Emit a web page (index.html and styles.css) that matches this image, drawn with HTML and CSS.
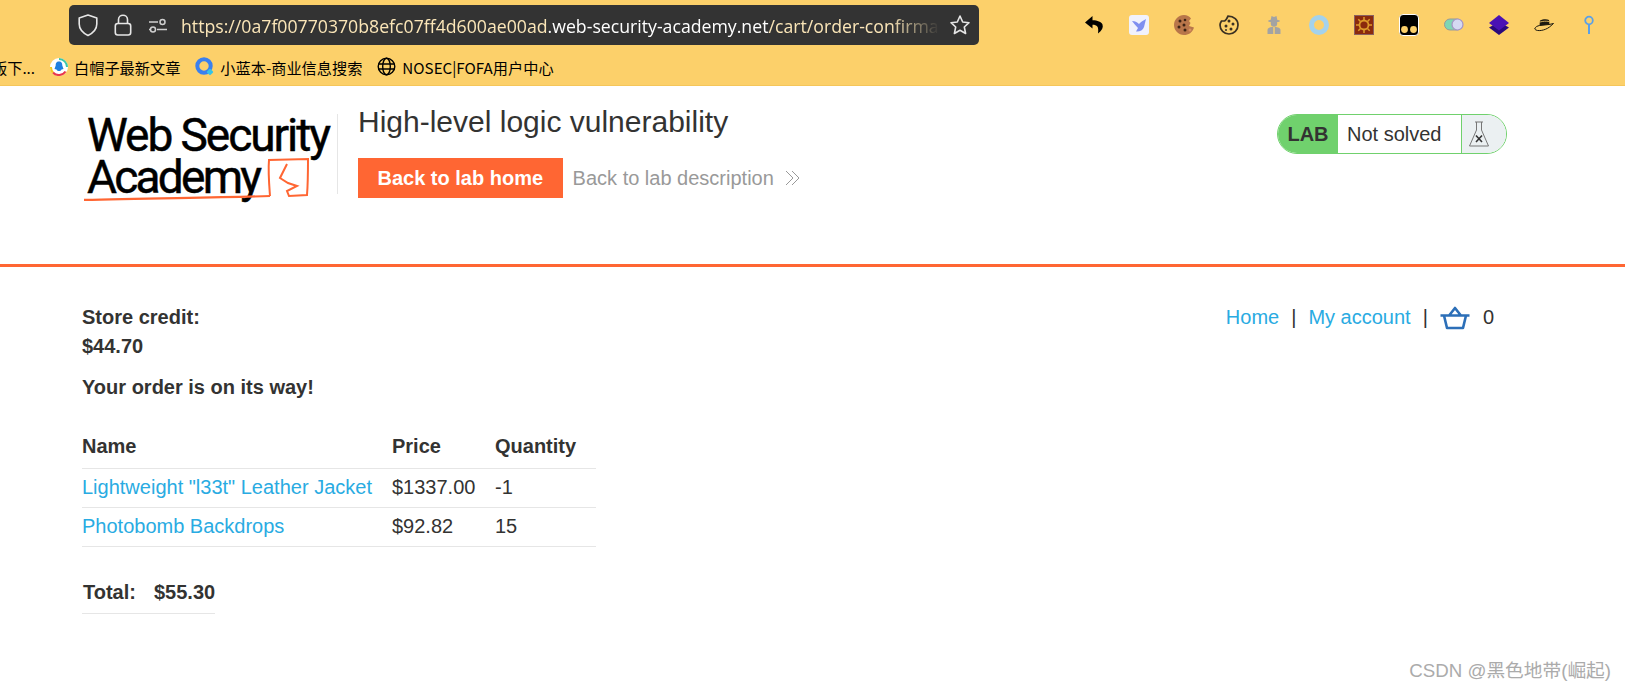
FILE: index.html
```html
<!DOCTYPE html>
<html>
<head>
    <title>High-level logic vulnerability</title>
    <link rel="stylesheet" href="styles.css">
</head>
<body>
    <!-- Browser toolbar -->
    <div class="browser">
        <div class="toolbar">
            <div class="urlbar">
                <svg class="url-icon" width="20" height="24" viewBox="0 0 20 24"><path d="M10 2 L18.800 5 V11 C18.800 16.500 15 20 10 22.500 C5 20 1.200 16.500 1.200 11 V5 Z" fill="none" stroke="#e6e6e6" stroke-width="1.600" stroke-linejoin="round"/></svg>
                <svg class="url-icon" width="18" height="24" viewBox="0 0 18 24"><rect x="1.300" y="10.500" width="15.400" height="11.500" rx="2.500" fill="none" stroke="#e6e6e6" stroke-width="1.600"/><path d="M4.500 10.500 V6.500 C4.500 0.800 13.500 0.800 13.500 6.500 V10.500" fill="none" stroke="#e6e6e6" stroke-width="1.600"/></svg>
                <svg class="url-icon" width="20" height="22" viewBox="0 0 20 22"><path d="M1 8 H10 M1 15.500 H2 M9 15.500 H19" stroke="#cfcfcf" stroke-width="1.500"/><circle cx="14.500" cy="8" r="2.500" fill="none" stroke="#cfcfcf" stroke-width="1.500"/><circle cx="5" cy="15.500" r="2.500" fill="none" stroke="#cfcfcf" stroke-width="1.500"/></svg>
                <div class="url-text"><span class="url-dim">https://0a7f00770370b8efc07ff4d600ae00ad</span>.web-security-academy.net<span class="url-dim">/cart/order-confirma</span></div>
                <svg class="url-star" width="22" height="22" viewBox="0 0 22 22"><path d="M11 2 L13.700 8 L20 8.700 L15.300 13 L16.600 19.500 L11 16.200 L5.400 19.500 L6.700 13 L2 8.700 L8.300 8 Z" fill="none" stroke="#e6e6e6" stroke-width="1.600" stroke-linejoin="round"/></svg>
            </div>
            <div class="extensions">
                <svg width="20" height="20" viewBox="0 0 20 20"><path d="M8.500 1 L1 7.500 L8.500 13.500 V9.800 C13 9.800 15 11.500 14 18.500 C18 15.500 19.500 12.500 18.500 9.500 C17.500 7 13.500 5.300 8.500 5.300 Z" fill="#000"/></svg>
                <svg width="20" height="20" viewBox="0 0 20 20"><rect width="20" height="20" rx="3" fill="#f1f2fd"/><path d="M3 6 C6 6 8 7 10 9 C12 7 14 5.500 17 4 L15 12 C14 15.500 10 17 7 16.500 L9 13 C7 11 5 8.500 3 6 Z" fill="#7f8ff0"/></svg>
                <svg width="20" height="20" viewBox="0 0 20 20"><path d="M10 0 C13 0 15.500 1.200 17 3.500 L15 6 L16.500 8 L15 11 L20 12.500 C18.500 17.500 14.500 20 10 20 C4.500 20 0 15.500 0 10 C0 4.500 4.500 0 10 0 Z" fill="#b8764a"/><g fill="#3d2415"><circle cx="6" cy="6" r="1.500"/><circle cx="11" cy="5" r="1.300"/><circle cx="5" cy="12" r="1.500"/><circle cx="10" cy="10" r="1.500"/><circle cx="11" cy="15" r="1.500"/></g><circle cx="16" cy="15" r="1.500" fill="#d98f5f"/></svg>
                <svg width="20" height="20" viewBox="0 0 20 20"><path d="M9 1.200 C8 3.500 7 5.500 5.500 6 L2.500 6 C1.500 7.500 1 8.500 1 10 C1 15 5 19 10 19 C15 19 19 15 19 10 C19 5 15 1.200 9 1.200 Z" fill="none" stroke="#3a3022" stroke-width="1.700"/><g fill="#3a3022"><circle cx="10" cy="6" r="1.500"/><circle cx="14" cy="9" r="1.500"/><circle cx="7" cy="11" r="1.500"/><circle cx="12" cy="14" r="1.500"/><circle cx="7" cy="15" r="1"/></g></svg>
                <svg width="20" height="20" viewBox="0 0 20 20"><g fill="#a3a3a3"><ellipse cx="10" cy="6" rx="6" ry="1.500"/><path d="M6.500 6 L7.500 1 L10 2 L12.500 1 L13.500 6 Z"/><circle cx="10" cy="8.500" r="3.200"/><path d="M3.500 19 V15 C3.500 13 6 12 9.300 12 V19 Z M16.500 19 V15 C16.500 13 14 12 10.700 12 V19 Z"/></g></svg>
                <svg width="20" height="20" viewBox="0 0 20 20"><circle cx="10" cy="10" r="7.500" fill="none" stroke="#a4d2ec" stroke-width="5"/></svg>
                <svg width="20" height="20" viewBox="0 0 20 20"><rect x="0.500" y="0.500" width="19" height="19" fill="#8b2a0d" stroke="#8a6060"/><circle cx="10" cy="10" r="4.500" fill="none" stroke="#dd9a2a" stroke-width="1.800"/><path d="M10 2 V5 M10 15 V18 M2 10 H5 M15 10 H18 M4.300 4.300 L6.500 6.500 M13.500 13.500 L15.700 15.700 M4.300 15.700 L6.500 13.500 M13.500 6.500 L15.700 4.300" stroke="#dd9a2a" stroke-width="1.500"/></svg>
                <svg width="20" height="22" viewBox="0 0 20 22"><rect x="0.500" y="0.500" width="19" height="21" rx="3.500" fill="#000" stroke="#fff"/><circle cx="5.500" cy="15.500" r="3.400" fill="#fcd06a"/><circle cx="14.500" cy="15.500" r="3.400" fill="#fcd06a"/></svg>
                <svg width="20" height="20" viewBox="0 0 20 20"><rect x="0.500" y="4" width="18" height="11" rx="5.500" fill="#7fd6b4" stroke="#999"/><circle cx="13.500" cy="9.500" r="5.500" fill="#d5d9f2" stroke="#a593c4" stroke-width="1.200"/></svg>
                <svg width="20" height="20" viewBox="0 0 20 20"><path d="M0 12.500 L10 7 L20 12.500 L10 20 Z" fill="#2a0a7c"/><path d="M10 0 L20 8 L10 15.500 L0 8 Z" fill="#4a12b4"/></svg>
                <svg width="20" height="20" viewBox="0 0 20 20"><path d="M0.700 14 C1.500 11.500 3.500 11 5.500 10.500 L15 9.500 L19.500 8.500 L15.500 12 C11 15.500 3 17 0.700 14 Z" fill="none" stroke="#1d1a10" stroke-width="1"/><path d="M5.500 10.500 L6 5.500 C9 4 13 4 15 5 L15.500 9.500 Z" fill="#1d1a10"/><path d="M6 7 C9 6.200 12 6 15 6.500" stroke="#fcd06a" stroke-width="0.800" fill="none"/></svg>
                <svg width="20" height="20" viewBox="0 0 20 20"><circle cx="10" cy="5.500" r="3.800" fill="none" stroke="#5aa0e8" stroke-width="1.800"/><path d="M10 9.500 V19" stroke="#5aa0e8" stroke-width="2"/></svg>
                <svg width="20" height="20" viewBox="0 0 20 20"><circle cx="10" cy="10" r="9" fill="#fff2cf"/></svg>
            </div>
        </div>
        <div class="bookmarks">
            <span class="bookmark bookmark-cut">版下...</span>
            <span class="bookmark">
                <svg width="18" height="18" viewBox="0 0 18 18"><circle cx="9" cy="9" r="9" fill="#fff"/><path d="M9 1 A8 8 0 0 1 17 9" fill="none" stroke="#3cc7a8" stroke-width="2"/><path d="M15.500 13.500 A8 8 0 0 1 3 14.500" fill="none" stroke="#e8364c" stroke-width="2"/><path d="M3 14.500 A8 8 0 0 1 1 9" fill="none" stroke="#f2c81e" stroke-width="2"/><path d="M9 3.500 C11.700 3.500 12.300 5.500 12.300 7.500 L13.500 11 L11.500 11.500 C10.500 13.500 7.500 13.500 6.500 11.500 L4.500 11 L5.700 7.500 C5.700 5.500 6.300 3.500 9 3.500 Z" fill="#1f7fe0"/></svg>
                白帽子最新文章
            </span>
            <span class="bookmark">
                <svg width="19" height="19" viewBox="0 0 19 19"><circle cx="9" cy="9" r="6.700" fill="none" stroke="#3a80ee" stroke-width="4"/><rect x="12.500" y="12.500" width="5" height="5" rx="1" fill="#35c3e8" transform="rotate(45 15 15)"/></svg>
                小蓝本-商业信息搜索
            </span>
            <span class="bookmark">
                <svg width="19" height="19" viewBox="0 0 19 19"><g fill="none" stroke="#000" stroke-width="1.400"><circle cx="9.500" cy="9.500" r="8.300"/><ellipse cx="9.500" cy="9.500" rx="3.800" ry="8.300"/><path d="M1.500 7 H17.500 M1.500 12 H17.500"/></g></svg>
                NOSEC|FOFA用户中心
            </span>
        </div>
    </div>

    <!-- Lab header -->
    <div class="lab-header">
        <div class="logo">
            <svg width="250" height="92" viewBox="0 0 250 92">
                <text class="logo-text" x="3" y="37" textLength="244">Web Security</text>
                <text class="logo-text" x="3" y="79" textLength="175">Academy</text>
                <path d="M-1 86 C60 84 130 84 186 82" fill="none" stroke="#ff6633" stroke-width="2.200"/>
                <path d="M186 82 C185 69 184 57 185 46 L224 45 C224 57 224 69 223 81 L205 82 L203 77 L213 72 L204 69 L196 64 L203 50" fill="none" stroke="#ff6633" stroke-width="2"/>
            </svg>
        </div>
        <div class="lab-title">
            <h2>High-level logic vulnerability</h2>
            <div class="lab-links">
                <a class="lab-home">Back to lab home</a>
                <a class="lab-desc">Back to lab description
                    <svg width="16" height="16" viewBox="0 0 16 16"><path d="M1 1 L8 8 L1 15 M7 1 L14 8 L7 15" fill="none" stroke="#999" stroke-width="1"/></svg>
                </a>
            </div>
        </div>
        <div class="lab-status">
            <span class="status-lab">LAB</span>
            <span class="status-text">Not solved</span>
            <span class="status-icon">
                <svg width="22" height="30" viewBox="0 0 22 30"><path d="M7 3 H15 M8.500 3 V11 L1.500 27 H20.500 L13.500 11 V3" fill="none" stroke="#777" stroke-width="1"/><path d="M8 16.500 L14 23 M14 16.500 L8 23" stroke="#333" stroke-width="1.600"/></svg>
            </span>
        </div>
    </div>

    <!-- Page content -->
    <div class="content">
        <div class="top-row">
            <p class="credit">Store credit:<br>$44.70</p>
            <nav class="top-nav">
                <a>Home</a><span>|</span><a>My account</a><span>|</span>
                <svg width="30" height="24" viewBox="0 0 30 24"><path d="M0.500 9.500 H29.500 M4 9.500 L7 22 H23 L26 9.500 M9.500 9 L15 2 L20.500 9" fill="none" stroke="#2c6fb8" stroke-width="2.600" stroke-linejoin="round"/></svg>
                <span class="cart-count">0</span>
            </nav>
        </div>
        <p class="order-msg">Your order is on its way!</p>
        <table class="order-table">
            <tr><th class="col-name">Name</th><th class="col-price">Price</th><th>Quantity</th></tr>
            <tr><td><a>Lightweight "l33t" Leather Jacket</a></td><td>$1337.00</td><td>-1</td></tr>
            <tr><td><a>Photobomb Backdrops</a></td><td>$92.82</td><td>15</td></tr>
        </table>
        <table class="total-table">
            <tr><th>Total:</th><th>$55.30</th></tr>
        </table>
    </div>

    <div class="watermark">CSDN @黑色地带(崛起)</div>
</body>
</html>
```

FILE: styles.css
```css
html, body {
    height: 100%;
}

body {
    margin: 0;
    overflow: hidden;
    position: relative;
    background: #FFFFFF;
    color: #333332;
    font-family: "Liberation Sans", "Noto Sans CJK SC", sans-serif;
    font-size: 20px;
}

a {
    color: #29ABE2;
    text-decoration: none;
}

/* browser toolbar */
.browser {
    height: 85px;
    background: #FCD06A;
    border-bottom: 1px solid #F5C65A;
}

.toolbar {
    display: flex;
    align-items: flex-start;
    padding: 5px 0 0 69px;
    height: 53px;
    box-sizing: border-box;
}

.urlbar {
    display: flex;
    flex: none;
    align-items: center;
    width: 910px;
    height: 40px;
    padding: 0 8px 0 9px;
    box-sizing: border-box;
    background: #333333;
    border-radius: 5px;
}

.url-icon {
    flex: none;
    margin-right: 16px;
}

.url-text {
    flex: 1;
    margin-left: -3px;
    padding-top: 2px;
    overflow: hidden;
    white-space: nowrap;
    color: #FFFFFF;
    font-family: "Open Sans", sans-serif;
    font-size: 17.700px;
    -webkit-mask-image: linear-gradient(to right, #000 calc(100% - 50px), transparent 100%);
    mask-image: linear-gradient(to right, #000 calc(100% - 50px), transparent 100%);
}

.url-dim {
    color: #FBE6B8;
}

.url-star {
    flex: none;
    margin-left: 9px;
}

.extensions {
    display: flex;
    flex: none;
    align-items: center;
    gap: 25px;
    height: 40px;
    margin-left: 105px;
}

.extensions svg {
    flex: none;
}

.bookmarks {
    display: flex;
    align-items: center;
    gap: 15px;
    height: 27px;
    color: #000000;
    font-size: 15.200px;
    font-family: "Noto Sans CJK SC", "Liberation Sans", sans-serif;
}

.bookmark {
    display: flex;
    align-items: center;
    gap: 6px;
    white-space: nowrap;
}

.bookmark-cut {
    margin-left: -8px;
}

/* lab header */
.lab-header {
    display: flex;
    align-items: flex-start;
    height: 181px;
    padding: 28px 0 0 84px;
    box-sizing: border-box;
    border-bottom: 3px solid #FF6633;
}

.logo {
    width: 253px;
    height: 80px;
    border-right: 1px solid #E6E6E6;
}

.logo-text {
    font-family: Roboto, sans-serif;
    font-size: 46px;
    font-weight: 400;
    fill: #000000;
    stroke: #000000;
    stroke-width: 0.500px;
}

.lab-title {
    margin-left: 20px;
    width: 919px;
    margin-top: -10px;
}

.lab-title h2 {
    margin: 0 0 18px;
    font-size: 30px;
    font-weight: 400;
    line-height: 36px;
}

.lab-links {
    display: flex;
    align-items: center;
    gap: 10px;
}

.lab-home {
    padding: 0 19.500px;
    line-height: 40px;
    background: #FF6633;
    color: #FFFFFF;
    font-weight: 700;
}

.lab-desc {
    display: flex;
    align-items: center;
    gap: 11px;
    color: #999999;
}

.lab-status {
    display: flex;
    align-items: stretch;
    width: 230px;
    height: 40px;
    box-sizing: border-box;
    border: 1px solid #70D16D;
    border-radius: 20px;
    overflow: hidden;
}

.status-lab {
    display: flex;
    align-items: center;
    justify-content: center;
    width: 60px;
    background: #70D16D;
    font-weight: 700;
}

.status-text {
    display: flex;
    align-items: center;
    width: 124px;
    padding-left: 9px;
    box-sizing: border-box;
    border-right: 1px solid #70D16D;
}

.status-icon {
    display: flex;
    align-items: center;
    justify-content: center;
    flex: 1;
    padding-right: 10px;
    background: #EBF0F2;
}

/* content */
.content {
    padding: 36px 0 0 82px;
}

.top-row {
    display: flex;
    justify-content: space-between;
    width: 1412px;
}

.credit {
    margin: 0;
    font-weight: 700;
    line-height: 29px;
}

.top-nav {
    display: flex;
    align-items: center;
    height: 29px;
    gap: 12px;
}

.cart-count {
    margin-left: 1px;
}

.order-msg {
    margin: 12px 0 0;
    font-weight: 700;
    line-height: 28px;
}

.order-table {
    margin-top: 27px;
    width: 514px;
    table-layout: fixed;
    border-collapse: collapse;
}

.col-name {
    width: 310px;
}

.col-price {
    width: 103px;
}

.order-table th,
.order-table td {
    height: 38px;
    padding: 0;
    border-bottom: 1px solid #E6E6E6;
    text-align: left;
    white-space: nowrap;
}

.order-table th {
    height: 40px;
    padding-bottom: 2px;
    box-sizing: border-box;
}

.total-table {
    margin-top: 26px;
    border-collapse: collapse;
}

.total-table th {
    height: 39px;
    padding: 0 17px 1px 1px;
    border-bottom: 1px solid #E6E6E6;
    text-align: left;
}

.total-table th:last-child {
    padding-right: 0;
}

.watermark {
    position: absolute;
    right: 14px;
    bottom: 7px;
    color: #ABABAB;
    font-size: 18.700px;
}
```
